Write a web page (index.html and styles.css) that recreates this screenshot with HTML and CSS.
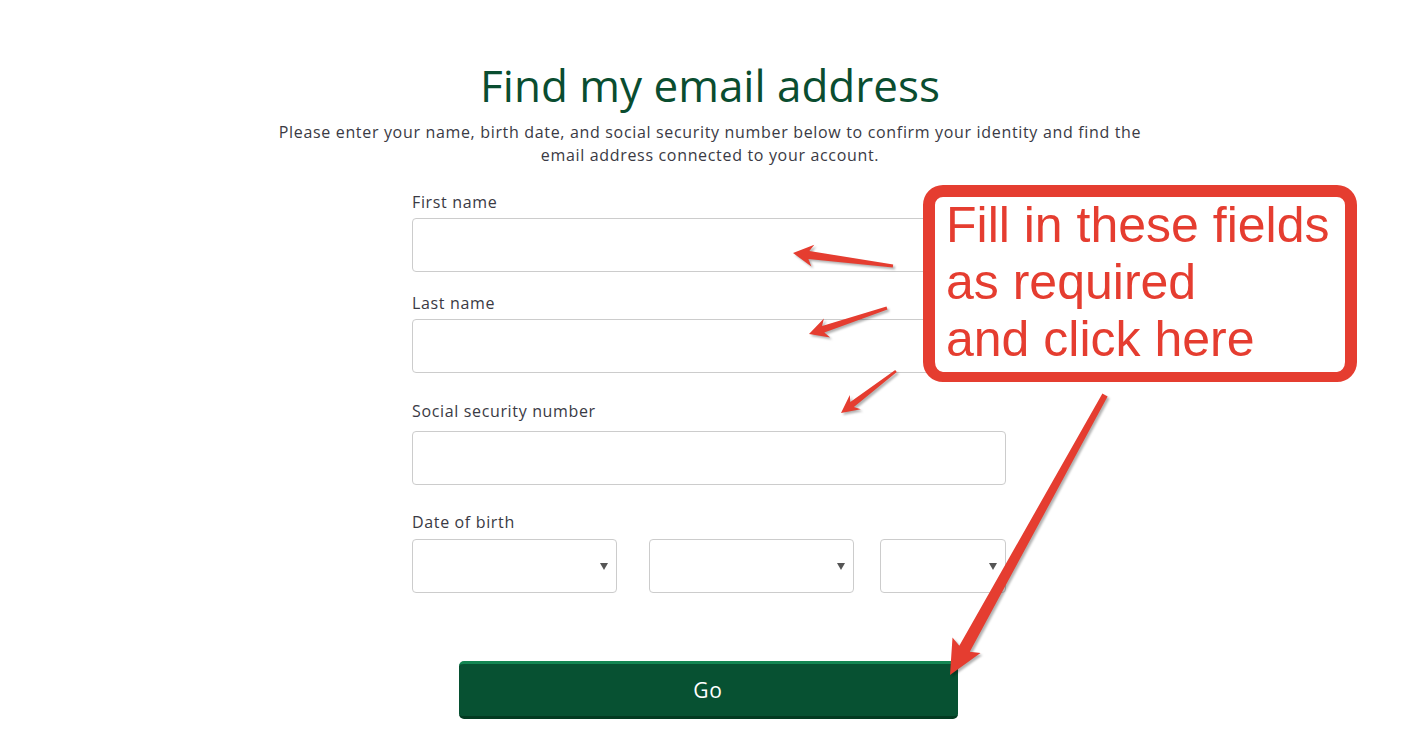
FILE: index.html
```html
<!DOCTYPE html>
<html lang="en">
<head>
    <meta charset="UTF-8">
    <meta name="viewport" content="width=device-width, initial-scale=1.0">
    <title>Find my email address</title>
    <link rel="stylesheet" href="styles.css">
</head>
<body>
    <div class="page">
        <h1 class="title">Find my email address</h1>
        <p class="intro">Please enter your name, birth date, and social security number below to confirm your identity and find the email address connected to your account.</p>

        <form class="lookup" id="lookupForm">
            <div class="field field-first">
                <label for="firstName">First name</label>
                <input type="text" id="firstName">
            </div>
            <div class="field field-last">
                <label for="lastName">Last name</label>
                <input type="text" id="lastName">
            </div>
            <div class="field field-ssn">
                <label for="ssn">Social security number</label>
                <input type="text" id="ssn">
            </div>
            <div class="field field-dob">
                <label for="month">Date of birth</label>
                <div class="dob-row">
                    <div class="select-wrap month"><select id="month"><option></option></select></div>
                    <div class="select-wrap day"><select id="day"><option></option></select></div>
                    <div class="select-wrap year"><select id="year"><option></option></select></div>
                </div>
            </div>
            <button type="submit" class="go">Go</button>
        </form>
    </div>

    <!-- screenshot annotations -->
    <div class="callout">Fill in these fields<br>as required<br>and click here</div>
    <svg class="arrows" id="arrows" width="1416" height="741" viewBox="0 0 1416 741"></svg>

    <script>
        // tail x, tail y, tip x, tip y, tail width, neck width, head length, head width
        const arrows = [
            [893, 266, 793, 253, 3, 8, 16, 22],
            [887, 308, 809, 334, 3, 7, 15, 20],
            [896, 371, 841, 413, 2.5, 6, 14, 18],
            [1105, 395, 950, 675, 6, 12, 30, 32]
        ];

        const svg = document.getElementById('arrows');

        arrows.forEach(([tx, ty, px, py, tw, nw, hl, hw]) => {
            const len = Math.hypot(px - tx, py - ty);
            const dx = (px - tx) / len;
            const dy = (py - ty) / len;
            const nx = -dy;
            const ny = dx;
            const bx = px - dx * hl;
            const by = py - dy * hl;
            // wings sit a little behind the neck for a barbed look
            const wx = px - dx * (hl + 4);
            const wy = py - dy * (hl + 4);
            const pts = [
                [tx + nx * tw / 2, ty + ny * tw / 2],
                [bx + nx * nw / 2, by + ny * nw / 2],
                [wx + nx * hw / 2, wy + ny * hw / 2],
                [px, py],
                [wx - nx * hw / 2, wy - ny * hw / 2],
                [bx - nx * nw / 2, by - ny * nw / 2],
                [tx - nx * tw / 2, ty - ny * tw / 2]
            ];
            const poly = document.createElementNS('http://www.w3.org/2000/svg', 'polygon');
            poly.setAttribute('points', pts.map(p => p[0].toFixed(1) + ',' + p[1].toFixed(1)).join(' '));
            poly.setAttribute('stroke-linejoin', 'round');
            svg.appendChild(poly);
        });
    </script>
</body>
</html>
```

FILE: styles.css
```css
body {
    margin: 0;
    font-family: "Open Sans", "Noto Sans", sans-serif;
    color: #3a3a44;
    background: #ffffff;
}
.page {
    width: 1416px;
    padding-top: 59px;
    display: flex;
    flex-direction: column;
    align-items: center;
}
.title {
    margin: 0;
    font-size: 44px;
    font-weight: 400;
    line-height: 52px;
    color: #0a4d30;
    transform: translateX(2px);
}
.intro {
    width: 900px;
    margin: 10px 0 0;
    font-size: 16px;
    line-height: 23px;
    letter-spacing: 0.67px;
    text-align: center;
    transform: translateX(2px);
}
.lookup {
    width: 594px;
    margin-top: 24px;
    display: flex;
    flex-direction: column;
    transform: translateX(1px);
}
.field label {
    display: block;
    font-size: 16px;
    line-height: 22px;
    letter-spacing: 0.65px;
}
.field input,
.field select {
    display: block;
    box-sizing: border-box;
    width: 100%;
    height: 54px;
    border: 1px solid #cccccc;
    border-radius: 4px;
    background: #ffffff;
    font-family: inherit;
    font-size: 16px;
}
.field-first input { margin-top: 5px; }
.field-last { margin-top: 20px; }
.field-last input { margin-top: 5px; }
.field-ssn { margin-top: 27px; }
.field-ssn input { margin-top: 9px; }
.field-dob { margin-top: 26px; }
.dob-row {
    margin-top: 6px;
    display: flex;
}
.select-wrap {
    position: relative;
}
.select-wrap select {
    appearance: none;
    -webkit-appearance: none;
}
.select-wrap::after {
    content: "";
    position: absolute;
    right: 9px;
    top: 24px;
    border-left: 4px solid transparent;
    border-right: 4px solid transparent;
    border-top: 7px solid #555555;
}
.month { width: 205px; }
.day { width: 205px; margin-left: 32px; }
.year { width: 126px; margin-left: 26px; }
.go {
    align-self: center;
    width: 499px;
    height: 58px;
    margin-top: 68px;
    transform: translateX(-1px);
    box-sizing: border-box;
    border: none;
    border-top: 3px solid #138552;
    border-bottom: 3px solid #033a21;
    border-radius: 5px;
    background: #075132;
    color: #ffffff;
    font-family: inherit;
    font-size: 21px;
    letter-spacing: 0.8px;
}
.callout {
    position: absolute;
    left: 923px;
    top: 185px;
    box-sizing: border-box;
    width: 434px;
    height: 197px;
    padding-left: 11px;
    border: 12px solid #e53d30;
    border-bottom-width: 10px;
    border-radius: 20px;
    background: #ffffff;
    color: #e53d30;
    font-family: "Liberation Sans", Arial, sans-serif;
    font-size: 50px;
    line-height: 57px;
    white-space: nowrap;
}
.arrows {
    position: absolute;
    left: 0;
    top: 0;
    pointer-events: none;
    fill: #e53d30;
    filter: drop-shadow(2px 2px 1px rgba(0, 0, 0, 0.3));
}
```
